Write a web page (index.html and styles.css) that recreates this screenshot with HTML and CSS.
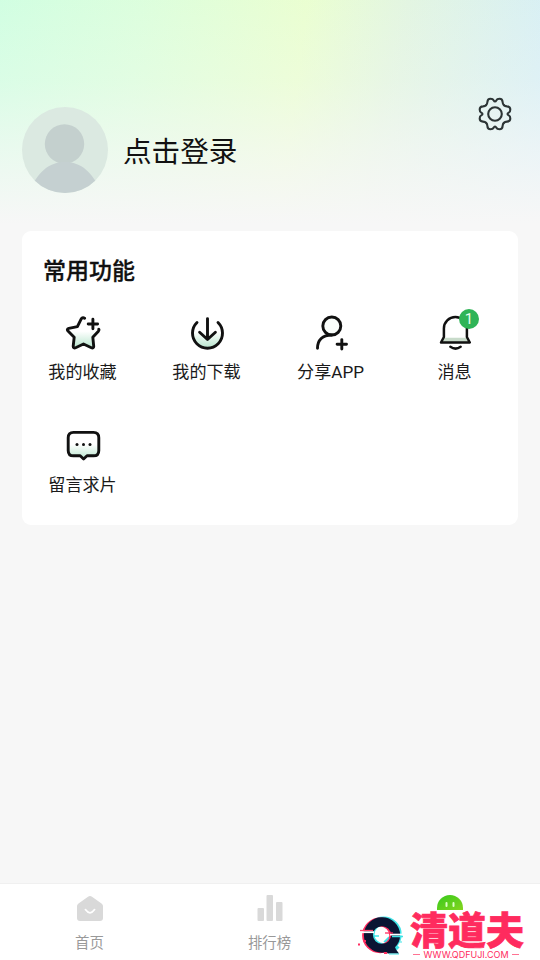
FILE: index.html
```html
<!DOCTYPE html>
<html lang="zh-CN">
<head>
<meta charset="utf-8">
<title>我的</title>
<link rel="stylesheet" href="styles.css">
</head>
<body>
<svg width="0" height="0" class="defs" aria-hidden="true">
  <defs>
    <linearGradient id="mint" x1="0" y1="0" x2="0" y2="1">
      <stop offset=".45" stop-color="#fff"/><stop offset="1" stop-color="#b9e6ce"/>
    </linearGradient>
    <linearGradient id="lime" x1="0" y1="0" x2="1" y2="1">
      <stop offset="0" stop-color="#35c91c"/><stop offset="1" stop-color="#85d51f"/>
    </linearGradient>
    <path id="teeth" d="M-8.9-8.9C-7.9-9.7-7.7-10.5-7.6-12C-7.5-14.4-6.3-15.3-4.5-15.3C-2.7-15.3-1.9-14.9-1.4-13.8Q0-11.2 1.4-13.8C1.9-14.9 2.7-15.3 4.5-15.3C6.3-15.3 7.5-14.4 7.6-12C7.7-10.5 7.9-9.7 8.9-8.9"/>
  </defs>
</svg>
<div class="page">
  <header class="profile">
    <svg class="avatar" viewBox="0 0 86 86">
      <clipPath id="round"><circle cx="43" cy="43" r="43"/></clipPath>
      <g clip-path="url(#round)">
        <rect width="86" height="86" fill="#dbe9e1"/>
        <circle cx="42.5" cy="37" r="19.7" fill="#c4d0ce"/>
        <path d="M7 86C15 65 27 55 43 55S71 65 79 86Z" fill="#c5d0d1"/>
      </g>
    </svg>
    <a class="login">点击登录</a>
    <svg class="gear" viewBox="-17 -17 34 34">
      <use href="#teeth"/><use href="#teeth" transform="rotate(90)"/><use href="#teeth" transform="rotate(180)"/><use href="#teeth" transform="rotate(270)"/>
      <circle r="6.8"/>
    </svg>
  </header>
  <main class="card">
    <h2>常用功能</h2>
    <div class="grid">
      <div class="item">
        <svg class="icon" viewBox="0 0 36 36">
          <path d="M18 3 12.6 12.2 2.2 14.2 9.2 21.8 8.2 32.5 18 28.6 28 32.5 27.4 21.8 33 15Z" fill="url(#mint)"/>
          <path d="M19.6 3.2C17.8 2.1 16.7 3 16.1 4.2L12.4 11.6 3.8 13.4C2.2 13.8 2 15 3 16L9.2 22.2 8.2 31.2C8.2 32.8 9.3 33.4 10.6 32.7L18.5 29 26.4 32.7C27.7 33.4 28.8 32.8 28.7 31.2L27.8 22.2 33.4 16.2Q34.3 15 33.8 14.2M27.9 4.3V13.7M23.2 9H32.6" class="line"/>
        </svg>
        <span>我的收藏</span>
      </div>
      <div class="item">
        <svg class="icon" viewBox="0 0 36 36">
          <circle cx="18.5" cy="18" r="14.5" fill="url(#mint)"/>
          <path d="M8 7.5A15 15 0 1 0 29 7.5M18.5 3.6V24M10.6 17.2 18.5 24.5 26.4 17.2" class="line"/>
        </svg>
        <span>我的下载</span>
      </div>
      <div class="item">
        <svg class="icon" viewBox="0 0 36 36">
          <circle cx="18.8" cy="11" r="9" fill="#fafefb"/>
          <path d="M4.5 33.3C4.5 25 9.5 20 18.8 20M28.8 24.6V34M24.1 29.3H33.5" class="line"/>
          <circle cx="18.8" cy="11" r="9" class="line"/>
        </svg>
        <span>分享APP</span>
      </div>
      <div class="item">
        <svg class="icon" viewBox="0 0 36 36">
          <path d="M6.9 22.8H29.9L32 27H5Z" fill="#c8dbca"/>
          <path d="M4 27.5 6.9 22V13.6A11.5 11.5 0 0 1 29.9 13.6V22L32.8 27.5ZM13.4 31.8Q18.5 35.4 23.6 31.8" class="line thin"/>
        </svg>
        <b class="badge">1</b>
        <span>消息</span>
      </div>
      <div class="item">
        <svg class="icon" viewBox="0 0 36 36">
          <path d="M8.5 4.4H28.5Q33.8 4.4 33.8 9.8V22.4Q33.8 27.8 28.5 27.8H22L18.6 31 15.2 27.8H8.5Q3.2 27.8 3.2 22.4V9.8Q3.2 4.4 8.5 4.4Z" fill="url(#mint)"/>
          <path d="M8.5 4.4H28.5Q33.8 4.4 33.8 9.8V22.4Q33.8 27.8 28.5 27.8H22L18.6 31 15.2 27.8H8.5Q3.2 27.8 3.2 22.4V9.8Q3.2 4.4 8.5 4.4Z" class="line"/>
          <g fill="#111"><circle cx="12" cy="16.5" r="1.5"/><circle cx="18.5" cy="16.5" r="1.5"/><circle cx="25" cy="16.5" r="1.5"/></g>
        </svg>
        <span>留言求片</span>
      </div>
    </div>
  </main>
  <nav class="tabs">
    <a class="tab">
      <svg viewBox="0 0 28 28"><path d="M14 2Q15 2 16 2.8L25.5 9.4Q27 10.5 27 12V24Q27 27 24 27H4Q1 27 1 24V12Q1 10.5 2.5 9.4L12 2.8Q13 2 14 2Z" fill="#d9d9d9"/><path d="M9.4 15.6Q14 22 18.6 15.6" fill="none" stroke="#fff" stroke-width="1.7" stroke-linecap="round"/></svg>
      <span>首页</span>
    </a>
    <a class="tab">
      <svg viewBox="0 0 28 28" fill="#d9d9d9"><rect x="1.5" y="14" width="6.5" height="13" rx="1"/><rect x="10.5" y="1" width="6.5" height="26" rx="1"/><rect x="20" y="8" width="6.5" height="19" rx="1"/></svg>
      <span>排行榜</span>
    </a>
    <a class="tab">
      <svg viewBox="0 0 28 28"><path d="M1 16V14A13 13 0 0 1 27 14V16Z" fill="url(#lime)"/><path d="M10.5 9V12M17.5 9V12" stroke="#dcffc4" stroke-width="2" stroke-linecap="round"/></svg>
    </a>
  </nav>
</div>
<div class="mark">
  <svg class="mark-logo" viewBox="0 0 48 42">
    <g fill="none" stroke-width="9">
      <g stroke="#3fe3e6"><ellipse cx="26.6" cy="19.4" rx="13.6" ry="13.3"/><path d="M29 24 40 35" stroke-width="7"/></g>
      <g stroke="#ff2d60"><ellipse cx="23.2" cy="20.4" rx="13.6" ry="13.3"/></g>
      <g stroke="#0b1533"><ellipse cx="25" cy="20" rx="13.6" ry="13.3"/></g>
    </g>
    <path d="M27 29 36 27 39 34.5 42 38.5H30.5L29 35Z" fill="#0b1533"/>
    <path d="M3 15.5H16" stroke="#ff4770" stroke-width="1.3"/>
    <path d="M5 17.2H17" stroke="#fff" stroke-width="1.8"/>
    <path d="M33 19.6H45" stroke="#fff" stroke-width="1.8"/>
    <path d="M28 18H36" stroke="#ff2d60" stroke-width="1.3"/>
    <path d="M35 21.5H46M17 21H22" stroke="#3fe3e6" stroke-width="1.3"/>
    <path d="M1 29.5H3M6.5 26H9M27 38H30" stroke="#ff2d60" stroke-width="2"/>
    <path d="M43 27H45M32 39H42" stroke="#3fe3e6" stroke-width="1.2"/>
  </svg>
  <div class="mark-text">
    <strong>清道夫</strong>
    <div class="site"><i></i><span>WWW.QDFUJI.COM</span><i></i></div>
  </div>
</div>
</body>
</html>
```
FILE: styles.css
```css
* { box-sizing: border-box; }
body {
  margin: 0;
  font-family: Roboto, "Noto Sans CJK SC", sans-serif;
  color: #111;
}
.defs { position: absolute; }
.page {
  height: 960px;
  display: flex;
  flex-direction: column;
  background: #f7f7f7;
}
.profile {
  height: 231px;
  flex: none;
  display: flex;
  align-items: flex-start;
  padding: 107px 28px 0 22px;
  background:
    linear-gradient(to bottom, rgba(247,247,247,.08) 0%, rgba(247,247,247,.28) 35%, rgba(247,247,247,.65) 65%, #f7f7f7 97%),
    linear-gradient(97deg, #ceffe0 0%, #daffdb 25%, #e9ffce 54%, #e1f5e0 72%, #d4eef7 100%);
}
.avatar { width: 86px; height: 86px; flex: none; }
.login {
  margin: 21px 0 0 15px;
  font-size: 28.6px;
  line-height: 44px;
  font-family: "Noto Sans CJK SC", sans-serif;
}
.gear {
  width: 34px;
  height: 34px;
  margin: -10px .5px 0 auto;
  fill: none;
  stroke: #2c3435;
  stroke-width: 2.1;
  stroke-linejoin: round;
  stroke-linecap: round;
}
.card {
  flex: none;
  height: 294px;
  margin: 0 22px;
  background: #fff;
  border-radius: 9px;
}
h2 {
  margin: 0;
  padding: 24px 0 0 21px;
  font-size: 23px;
  line-height: 34px;
  font-weight: 500;
  -webkit-text-stroke: .3px #111;
}
.grid {
  display: grid;
  grid-template-columns: repeat(4, 124px);
  grid-auto-rows: 113px;
  margin: 25.5px 0 0 -1.5px;
}
.item {
  position: relative;
  display: flex;
  flex-direction: column;
  align-items: center;
  font-size: 17.1px;
  line-height: 24px;
}
.item span { margin-top: 9.5px; color: #1a1a1a; }
.icon { width: 36px; height: 36px; }
.line {
  fill: none;
  stroke: #111;
  stroke-width: 2.9;
  stroke-linecap: round;
  stroke-linejoin: round;
}
.thin { stroke-width: 2.5; }
.badge {
  position: absolute;
  left: 66.5px;
  top: -6px;
  width: 20px;
  height: 20px;
  border-radius: 50%;
  background: #2fb457;
  color: #e8ffee;
  font-size: 15px;
  font-weight: 400;
  line-height: 20px;
  text-align: center;
}
.tabs {
  display: flex;
  height: 77px;
  margin-top: auto;
  background: #fff;
  border-top: 1px solid #f0f0f0;
}
.tab {
  flex: 1;
  display: flex;
  flex-direction: column;
  align-items: center;
  padding-top: 10px;
  font-size: 14.4px;
  line-height: 20px;
  color: #999;
}
.tab svg { width: 28px; height: 28px; }
.tab span { margin: 12px 1px 0 0; }
.mark {
  position: absolute;
  left: 357px;
  top: 907px;
  width: 170px;
  height: 53px;
  display: flex;
}
.mark-logo { width: 48px; height: 42px; margin-top: 8px; flex: none; }
.mark-text { margin-left: 5px; color: #ff2b5e; }
.mark strong {
  display: block;
  font: 900 38px/42px "Noto Sans CJK SC", sans-serif;
  height: 42px;
  white-space: nowrap;
  -webkit-text-stroke: .7px #ff2b5e;
}
.site {
  display: flex;
  align-items: center;
  gap: 3px;
  width: 106px;
  margin-left: 3px;
  font: 400 9px/11px Inter, sans-serif;
  white-space: nowrap;
}
.site i { flex: 1; height: 1px; background: #ff7392; }
```
